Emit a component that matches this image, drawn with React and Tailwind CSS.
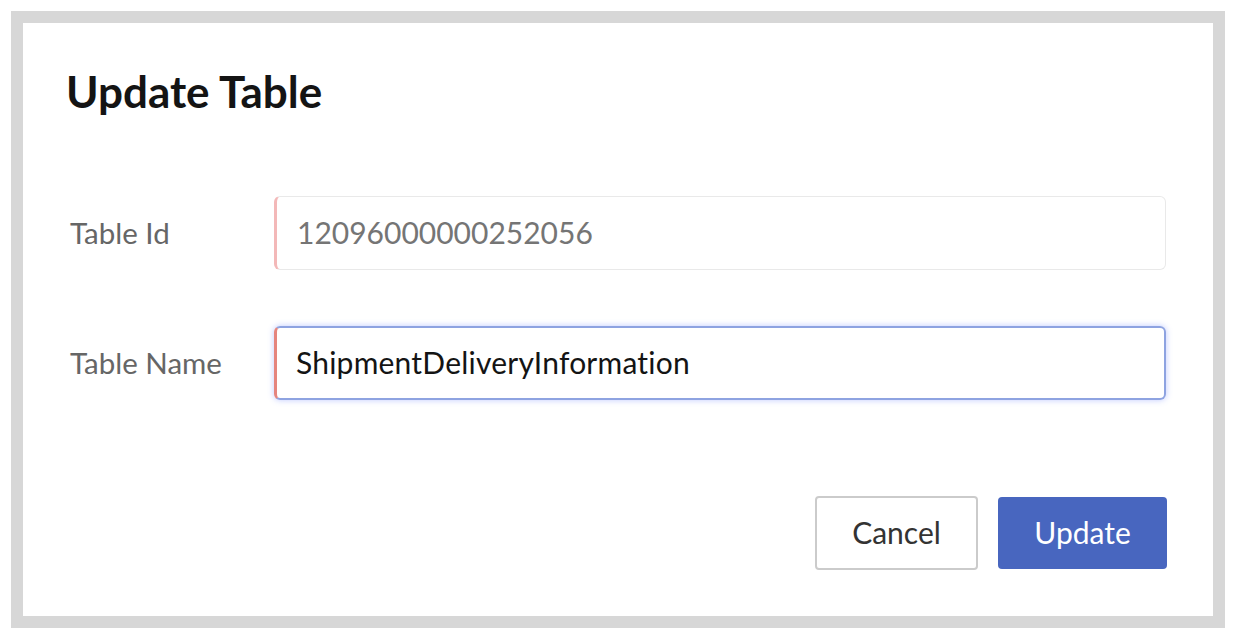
export default function App() {
  return (
    <div className="w-[1236px] h-[640px] bg-white p-[11px] [font-variant-ligatures:none]" style={{ fontFamily: "Lato, 'Noto Sans', sans-serif" }}>
      <div className="h-[617px] border-[12px] border-[#d7d7d7] bg-white pl-[43px] pr-[47px] pt-[42px] flex flex-col">
        <h1 className="text-[44px] leading-[1.2] font-bold text-[#141414]">Update Table</h1>
        <div className="mt-[78px] flex flex-col gap-[56px]">
          <div className="flex items-center">
            <label className="w-[208px] pl-[4px] text-[29.5px] text-[#666666]">Table Id</label>
            <div className="flex-1 h-[74px] flex items-center rounded-[6px] border border-[#e9e9e9] border-l-[3px] border-l-[#f3b8b8] pl-[20px] text-[30px] text-[#757575]">
              12096000000252056
            </div>
          </div>
          <div className="flex items-center">
            <label className="w-[208px] pl-[4px] text-[29.5px] text-[#666666]">Table Name</label>
            <div className="flex-1 h-[74px] flex items-center rounded-[6px] border-2 border-[#8ea3e1] border-l-[3px] border-l-[#e5857e] pl-[19px] text-[30px] tracking-[0.22px] text-[#141414] shadow-[0_0_6px_rgba(110,135,255,0.45)]">
              ShipmentDeliveryInformation
            </div>
          </div>
        </div>
        <div className="mt-[96px] flex justify-end gap-[20px] mr-[-1px]">
          <button className="w-[163px] h-[74px] rounded-[4px] border-2 border-[#cbcbcb] bg-white text-[30px] text-[#333333]">Cancel</button>
          <button className="w-[169px] h-[72px] mt-[1px] rounded-[4px] bg-[#4866bf] text-[30px] text-white">Update</button>
        </div>
      </div>
    </div>
  );
}
